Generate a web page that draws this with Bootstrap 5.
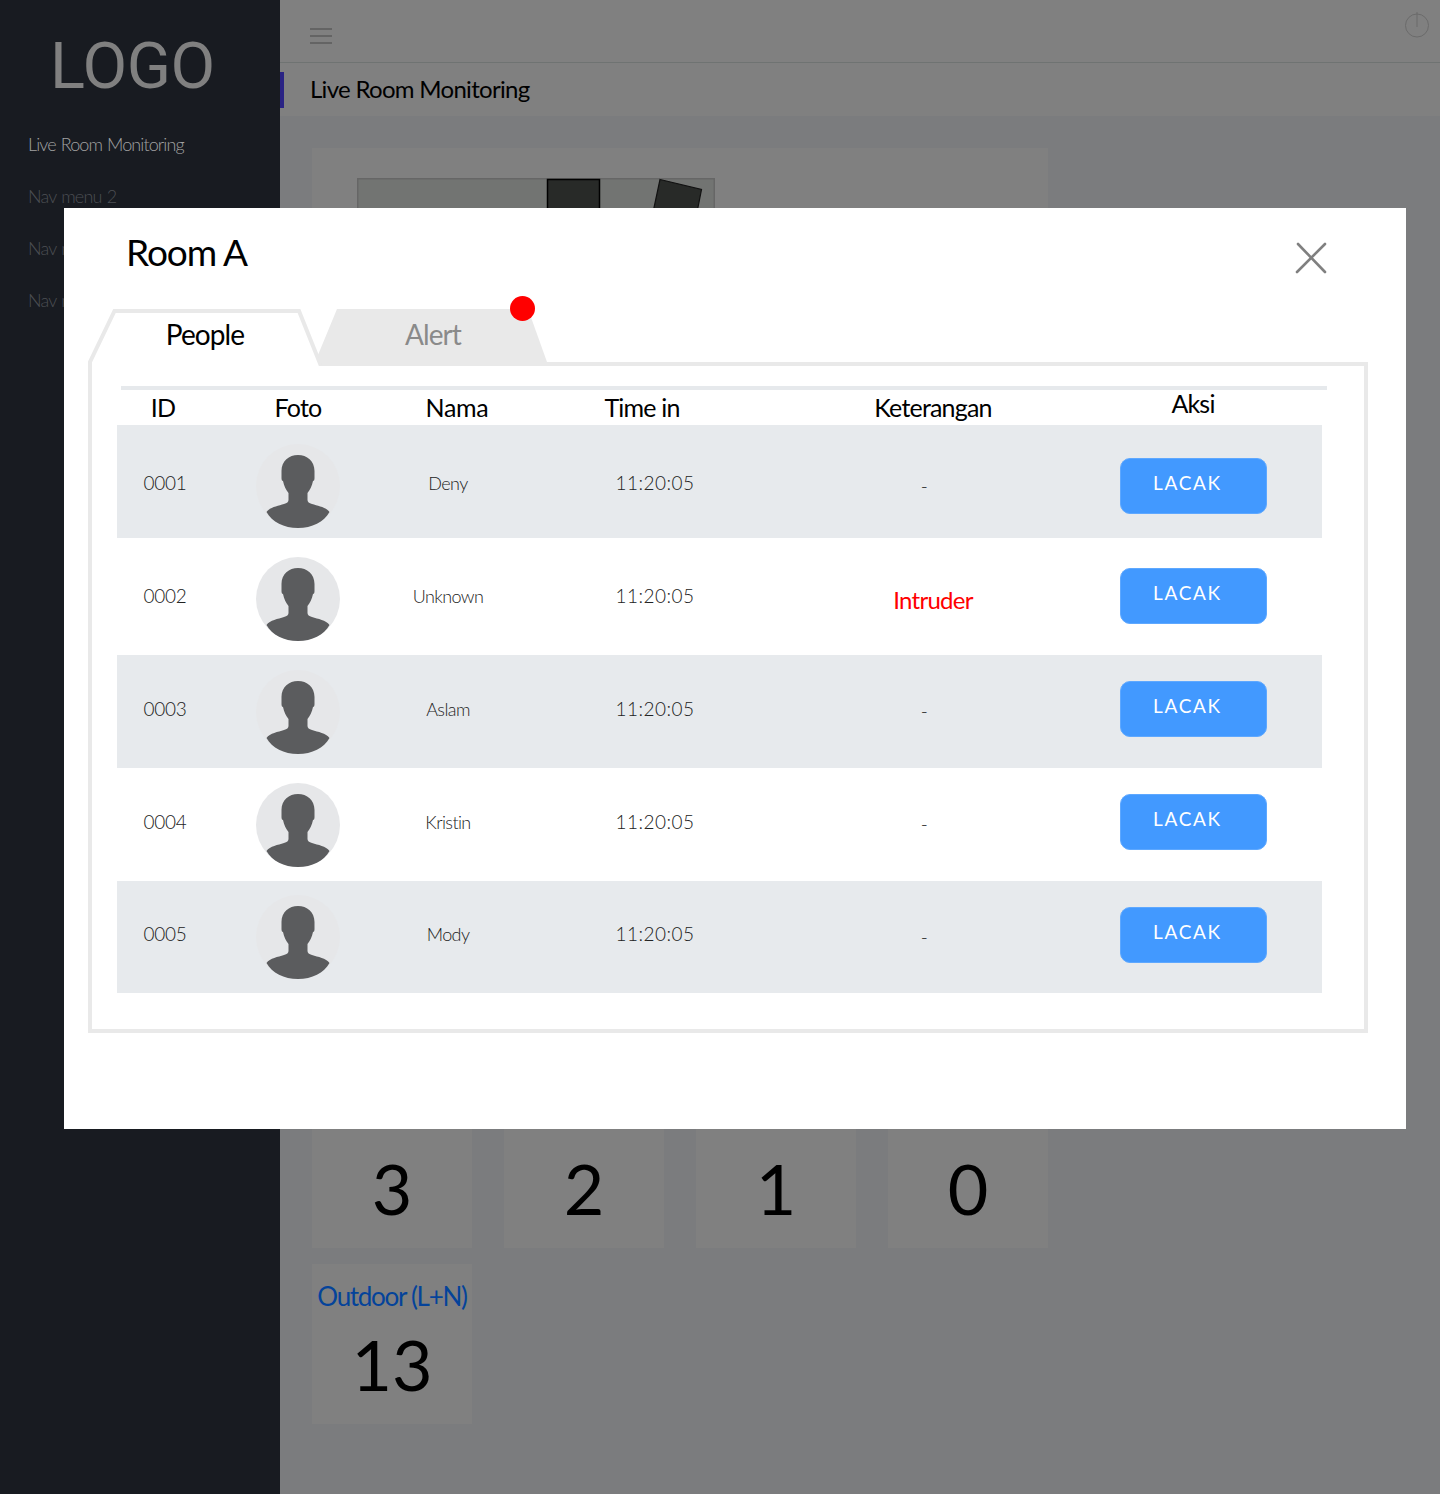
<!DOCTYPE html>
<html lang="id">
<head>
  <meta charset="UTF-8" />
  <meta name="viewport" content="width=device-width, initial-scale=1">
  <title>Live Room Monitoring</title>
  <link href="https://cdn.jsdelivr.net/npm/bootstrap@5.3.3/dist/css/bootstrap.min.css" rel="stylesheet">
  <style>
    body {
      background-color: #7b7c7e;
      font-family: Lato, "Liberation Sans", sans-serif;
      min-height: 1494px;
      position: relative;
    }
    .side-bar { width: 280px; min-height: 1494px; background-color: #181b21; flex-shrink: 0; }
    .side-logo {
      font-family: Roboto, sans-serif;
      font-size: 65px;
      line-height: 76px;
      color: #808080;
      padding: 28px 0 0 50px;
      height: 118px;
      letter-spacing: -.5px;
    }
    .side-link { display: block; height: 52px; line-height: 52px; padding-left: 28px; font-size: 18px; letter-spacing: -.8px; word-spacing: 1px; color: #4b4e53; text-decoration: none; font-weight: 300; }
    .side-link.on { color: #a2a2a2; letter-spacing: -.9px; }
    .top-strip { height: 63px; background-color: #808080; border-bottom: 1px solid #6f7372; padding: 12px 10px 0 30px; }
    .title-strip { height: 53px; background-color: #808080; position: relative; padding-left: 30px; font-size: 24px; line-height: 51px; color: #000; letter-spacing: -.7px; }
    .title-strip::before { content: ""; position: absolute; left: 0; top: 9px; width: 4px; height: 36px; background-color: #2a2384; }
    .page-body { padding: 32px; width: 800px; }
    .map-card { background-color: #808080; height: 924px; padding: 30px 0 0 45px; margin-bottom: 16px; }
    .tile-grid { display: grid; grid-template-columns: repeat(4, 160px); gap: 16px 32px; }
    .tile-box { height: 160px; background-color: #808080; text-align: center; }
    .tile-name { font-size: 26px; line-height: 32px; padding-top: 16px; height: 48px; color: #04439a; letter-spacing: -1.3px; white-space: nowrap; }
    .tile-box:nth-child(-n+4) .tile-name { padding-top: 11px; }
    .tile-num { font-size: 70px; line-height: 80px; margin-top: 12px; color: #000; }

    .room-modal { position: absolute; left: 64px; top: 208px; width: 1342px; height: 921px; background-color: #fff; padding: 101px 38px 0 24px; }
    .room-title { position: absolute; left: 62px; top: 22px; margin: 0; font-size: 37px; line-height: 44px; color: #000; letter-spacing: -1.1px; font-weight: 400; }
    .room-close { position: absolute; left: 1231px; top: 34px; }
    .tab-strip { position: relative; z-index: 1; height: 57px; }
    .tab-item { position: relative; height: 57px; text-align: center; font-size: 28px; line-height: 51px; letter-spacing: -.9px; }
    .tab-item svg { position: absolute; left: 0; top: 0; }
    .tab-item span { position: relative; }
    .tab-people { width: 234px; color: #000; }
    .tab-alert { width: 230px; margin-left: -4px; color: #8a8a8a; }
    .tab-dot { position: absolute; left: 192px; top: -13px; width: 25px; height: 25px; border-radius: 50%; background-color: #f00; }
    .tab-panel { border: 4px solid #e9e9e9; height: 671px; margin-top: -4px; padding: 20px 0 0 25px; }
    .head-line { height: 4px; width: 1206px; margin-left: 4px; background-color: #e6e9ec; }

    .people-table { table-layout: fixed; width: 1205px; margin: 0; }
    .people-table > :not(caption) > * > * { padding: 0; border: 0; box-shadow: none; background-color: transparent; vertical-align: middle; text-align: center; color: #222; }
    .people-table thead th { height: 35px; line-height: 1; font-size: 25px; font-weight: 400; color: #000; letter-spacing: -.8px; white-space: nowrap; }
    .people-table .h-id { padding-right: 4px; }
    .people-table .h-nama { padding-left: 18px; letter-spacing: -.3px; }
    .people-table .h-time { padding-right: 26px; }
    .people-table .h-ket { padding-left: 18px; }
    .people-table .h-aksi { padding-left: 13px; padding-bottom: 8px; }
    .people-table tbody tr { height: 113px; }
    .people-table tbody tr:nth-child(odd) > td { background-color: #e7eaed; }
    .people-table tbody td { font-size: 19px; font-weight: 300; letter-spacing: -.3px; }
    .people-table tbody td.cell-txt { padding-bottom: 5px; }
    .people-table tbody td.cell-nama { font-size: 18px; letter-spacing: -.6px; }
    .people-table tbody td.cell-time { letter-spacing: .5px; }
    .people-table tbody tr.row-a > td { padding-top: 9px; }
    .people-table tbody tr.row-b { height: 117px; }
    .people-table tbody tr.row-b > td { padding-top: 4px; }
    .people-table tbody tr.row-e { height: 112px; }
    .people-table tbody td .intruder { position: relative; top: 1px; left: 9px; font-size: 24px; font-weight: 400; color: #f00; letter-spacing: -.7px; }
    .people-table tbody td.cell-btn { text-align: right; padding-right: 55px; padding-bottom: 5px; }
    .people-table tbody tr.row-a td.cell-btn { padding-bottom: 0; }
    .avatar-pic { display: block; margin: 0 auto; }
    .btn-lacak { width: 147px; height: 56px; padding: 0 0 5px 32px; text-align: left; background-color: #4299ff; border: 1px solid #5ea8ff; border-radius: 10px; color: #fff; font-size: 19px; font-weight: 400; letter-spacing: 1.7px; }
  </style>
</head>
<body>

<svg width="0" height="0" class="position-absolute">
  <symbol id="avatarIco" viewBox="0 0 84 84">
    <circle cx="42" cy="42" r="42" fill="#e6e7e9"/>
    <path fill="#5b5c5e" d="M42 11C33 11 25.5 17 25.5 27L25.5 34C25.5 36 26 37 27 37C28 42 30 46 32.5 49L32.5 56C32.5 58 31 59 28 60C22 62 14 63 10.5 68C16 78 28 84 42 84C56 84 68 78 73.5 68C70 63 62 62 56 60C53 59 51.5 58 51.5 56L51.5 49C54 46 56 42 57 37C58 37 58.5 36 58.5 34L58.5 27C58.5 17 51 11 42 11Z"/>
  </symbol>
</svg>

<div class="d-flex">
  <aside class="side-bar">
    <div class="side-logo">LOGO</div>
    <nav>
      <a class="side-link on" href="#">Live Room Monitoring</a>
      <a class="side-link" href="#">Nav menu 2</a>
      <a class="side-link" href="#">Nav menu 3</a>
      <a class="side-link" href="#">Nav menu 4</a>
    </nav>
  </aside>

  <main class="flex-grow-1">
    <div class="top-strip d-flex justify-content-between align-items-start">
      <svg class="mt-3" width="22" height="16" viewBox="0 0 22 16" stroke="#646464" stroke-width="2">
        <path d="M0 1H22M0 8H22M0 15H22"/>
      </svg>
      <svg width="26" height="26" viewBox="0 0 26 26" fill="none" stroke="#6b6b6b" stroke-width="1">
        <circle cx="13" cy="13.5" r="11.500"/>
        <path d="M13 0V15"/>
      </svg>
    </div>
    <div class="title-strip">Live Room Monitoring</div>

    <div class="page-body">
      <div class="map-card">
        <svg width="358" height="400" viewBox="0 0 358 400" class="d-block">
          <rect x=".75" y=".75" width="356.5" height="398" fill="#727472" stroke="#666" stroke-width="1.5"/>
          <rect x="190.5" y="1.5" width="52" height="120" fill="#282a28" stroke="#000" stroke-width="1.5"/>
          <path d="M303 1.5L344.500 11.500L325 110L282 100Z" fill="#282a28" stroke="#111" stroke-width="1.2"/>
        </svg>
      </div>
      <div class="tile-grid">
        <div class="tile-box"><div class="tile-name">Indoor (L)</div><div class="tile-num">3</div></div>
        <div class="tile-box"><div class="tile-name">Indoor (N)</div><div class="tile-num">2</div></div>
        <div class="tile-box"><div class="tile-name">Guest (L)</div><div class="tile-num">1</div></div>
        <div class="tile-box"><div class="tile-name">Guest (N)</div><div class="tile-num">0</div></div>
        <div class="tile-box"><div class="tile-name">Outdoor (L+N)</div><div class="tile-num">13</div></div>
      </div>
    </div>
  </main>
</div>

<div class="room-modal">
  <h2 class="room-title">Room A</h2>
  <svg class="room-close" width="32" height="32" viewBox="0 0 32 32" stroke="#808080" stroke-width="2.6" stroke-linecap="round">
    <path d="M3 2L30 30M30 2L2 30"/>
  </svg>

  <div class="tab-strip d-flex">
    <div class="tab-item tab-people">
      <svg width="234" height="57" viewBox="0 0 234 57">
        <path d="M2 57V53L26.500 2H211L233 57Z" fill="#fff"/>
        <path d="M2 57V53L26.500 2H211L233 57" fill="none" stroke="#e9e9e9" stroke-width="4"/>
      </svg>
      <span>People</span>
    </div>
    <div class="tab-item tab-alert">
      <svg width="230" height="57" viewBox="0 0 230 57">
        <path d="M19 0H210L229 53L230 57H4L0 46Z" fill="#e9e9e9"/>
      </svg>
      <span>Alert</span>
      <div class="tab-dot"></div>
    </div>
  </div>

  <div class="tab-panel">
    <div class="head-line"></div>
    <table class="table people-table">
      <colgroup>
        <col style="width:96px"><col style="width:170px"><col style="width:130px"><col style="width:284px"><col style="width:254px"><col style="width:271px">
      </colgroup>
      <thead>
        <tr>
          <th class="h-id">ID</th>
          <th>Foto</th>
          <th class="h-nama">Nama</th>
          <th class="h-time">Time in</th>
          <th class="h-ket">Keterangan</th>
          <th class="h-aksi">Aksi</th>
        </tr>
      </thead>
      <tbody id="peopleRows"></tbody>
    </table>
  </div>
</div>

<script>
const orang = [
  { id: "0001", nama: "Deny", ket: "-", kelas: "row-a" },
  { id: "0002", nama: "Unknown", ket: "Intruder", kelas: "row-b" },
  { id: "0003", nama: "Aslam", ket: "-", kelas: "" },
  { id: "0004", nama: "Kristin", ket: "-", kelas: "" },
  { id: "0005", nama: "Mody", ket: "-", kelas: "row-e" }
];
document.getElementById("peopleRows").innerHTML = orang.map(o => `
  <tr class="${o.kelas}">
    <td class="cell-txt">${o.id}</td>
    <td><svg class="avatar-pic" width="84" height="84"><use href="#avatarIco"/></svg></td>
    <td class="cell-txt cell-nama">${o.nama}</td>
    <td class="cell-txt cell-time">11:20:05</td>
    <td class="cell-ket">${o.ket === "-" ? "-" : `<span class="intruder">${o.ket}</span>`}</td>
    <td class="cell-btn"><button type="button" class="btn btn-lacak">LACAK</button></td>
  </tr>`).join("");
</script>
<script src="https://cdn.jsdelivr.net/npm/bootstrap@5.3.3/dist/js/bootstrap.bundle.min.js"></script>
</body>
</html>
